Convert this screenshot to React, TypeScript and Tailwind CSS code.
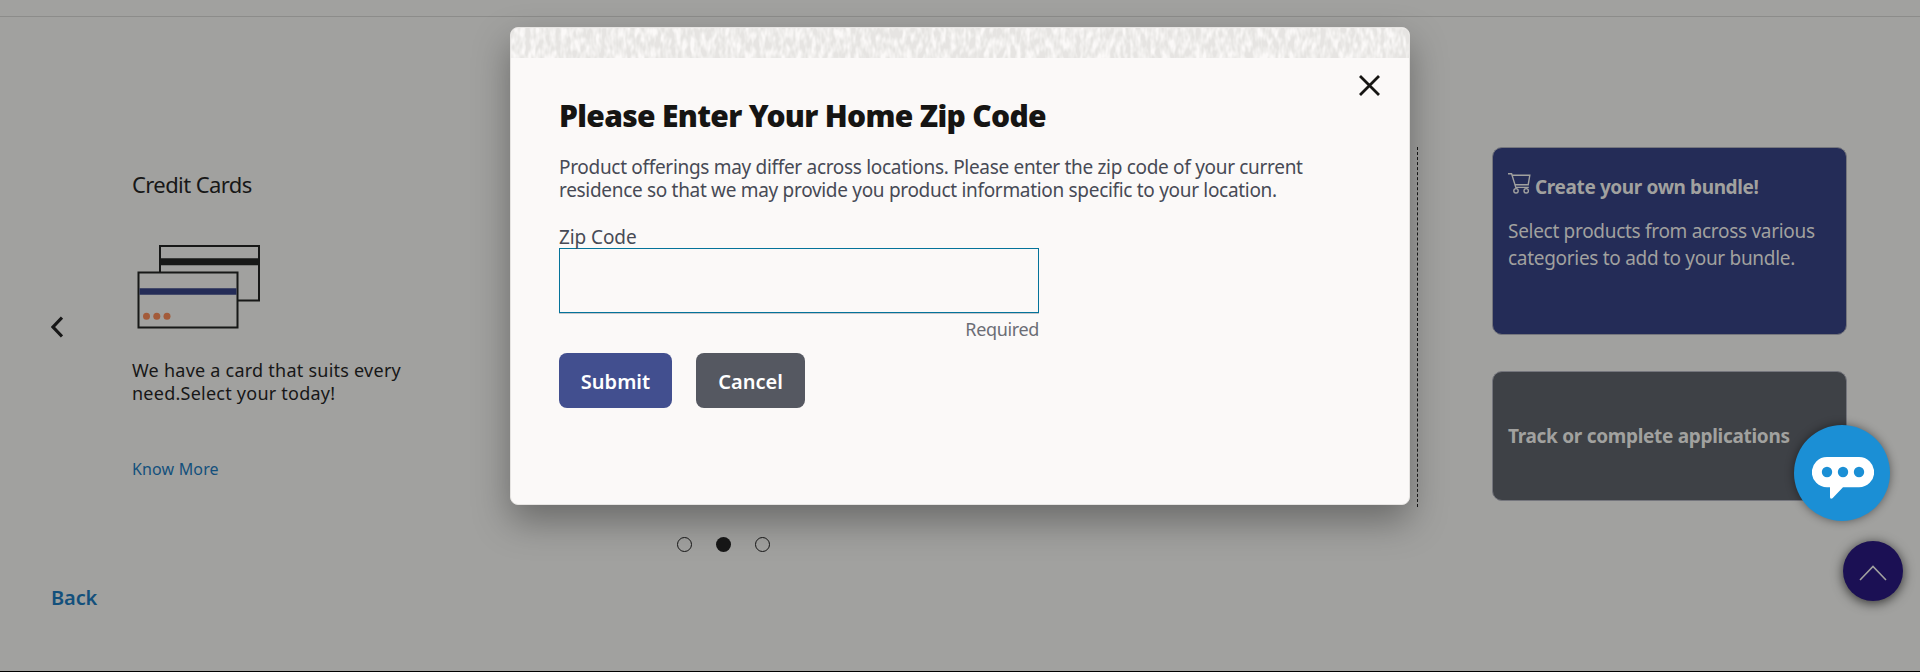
import React from 'react';

interface SideCardProps {
    className: string;
    children: React.ReactNode;
}

const SideCard: React.FC<SideCardProps> = ({ className, children }) => (
    <section className={`w-[355px] rounded-[10px] border border-[#75767d] px-[15px] text-[#a1a19f] ${className}`}>
        {children}
    </section>
);

const CreditCardsIcon: React.FC = () => (
    <svg className="ml-[5px] mt-[45px]" width="124" height="85" viewBox="0 0 124 85" fill="none">
        <path d="M23 28V2h99v54.5h-21" stroke="#171817" strokeWidth="2" />
        <path d="M24 14.3h97v7H24z" fill="#171817" />
        <path d="M1.5 28.5h99v55h-99z" stroke="#171817" strokeWidth="2" />
        <path d="M2.5 44.3h97v6.5h-97z" fill="#242c57" />
        <circle cx="9.5" cy="72.3" r="3.5" fill="#a35b3a" />
        <circle cx="19.8" cy="72.3" r="3.5" fill="#a35b3a" />
        <circle cx="30" cy="72.3" r="3.5" fill="#a35b3a" />
    </svg>
);

const CartIcon: React.FC = () => (
    <svg className="-mt-px" width="24" height="21" viewBox="0 0 24 21" fill="none" stroke="#a1a19f" strokeWidth="1.4">
        <path d="M0 .8h3.6l4.2 13.6h13M4.2 2.3h17.6l-1.6 9.4H7" />
        <circle cx="8" cy="17.8" r="2.2" />
        <circle cx="18.2" cy="17.8" r="2.2" />
    </svg>
);

const Texture: React.FC = () => (
    <svg className="block h-[30px] w-full">
        <filter id="grain" x="0" y="0" width="100%" height="100%" colorInterpolationFilters="sRGB">
            <feTurbulence type="fractalNoise" baseFrequency="0.2 0.09" numOctaves="2" seed="4" />
            <feColorMatrix values="0 0 0 0 0.9  0 0 0 0 0.895  0 0 0 0 0.885  2.6 0 0 0 -0.7" />
        </filter>
        <rect width="100%" height="100%" filter="url(#grain)" />
    </svg>
);

const ZipCodeDialog: React.FC = () => (
    <div
        role="dialog"
        className="absolute left-[510px] top-[27px] h-[478px] w-[900px] overflow-hidden rounded-lg border border-[#e6e4e2] bg-[#fbf9f8] shadow-[0_16px_36px_rgba(0,0,0,0.34)]"
    >
        <Texture />
        <button aria-label="Close" className="absolute right-[29px] top-[47px]">
            <svg width="21" height="21" viewBox="0 0 21 21" stroke="#161513" strokeWidth="2.8">
                <path d="M1 1l19 19M20 1L1 20" />
            </svg>
        </button>
        <div className="px-12 pt-[38px] text-[19px] text-[#474a55]">
            <h2 className="text-[30px] font-black leading-10 tracking-[-0.68px] text-[#161513]">
                Please Enter Your Home Zip Code
            </h2>
            <p className="mt-5 leading-[23.4px] tracking-[-0.31px]">
                Product offerings may differ across locations. Please enter the zip code of your current
                <br />
                residence so that we may provide you product information specific to your location.
            </p>
            <div className="mt-[22px] w-[480px]">
                <label htmlFor="zip" className="block h-[23px] leading-6 tracking-[-0.1px]">Zip Code</label>
                <input
                    id="zip"
                    className="block h-[65px] w-full border border-[#04739a] bg-transparent shadow-[0_1px_0_#c5c6ca] outline-none"
                />
                <div className="mt-1 text-right text-[18px] leading-6 tracking-[-0.35px] text-[#6b6d75]">Required</div>
            </div>
            <div className="mt-3 flex gap-6 text-[20px] font-semibold text-white">
                <button className="h-[55px] w-[113px] rounded-lg bg-[#424f8f] pt-[3px]">Submit</button>
                <button className="h-[55px] w-[109px] rounded-lg bg-[#555861] pt-[3px]">Cancel</button>
            </div>
        </div>
    </div>
);

export default function App() {
    return (
        <div className="relative flex h-[672px] w-full flex-col overflow-hidden bg-[#a1a19f] font-['Noto_Sans',sans-serif] text-[#171717]">
            <header className="h-[17px] border-b border-[#8c8c8a]" />
            <main className="mt-[130px] flex h-[360px]">
                <div className="flex w-[1418px] items-center border-r border-dashed border-[#171717] pl-[51px]">
                    <svg className="-mt-px" width="12" height="22" viewBox="0 0 12 22" fill="none" stroke="#171717" strokeWidth="3.2">
                        <path d="M11 1.5L2 11l9 9.5" />
                    </svg>
                    <div className="ml-[69px] flex h-full flex-col items-start pt-[22px]">
                        <h3 className="text-[22px] leading-[30px] tracking-[-0.6px]">Credit Cards</h3>
                        <CreditCardsIcon />
                        <p className="mt-[30px] text-[18px] leading-[23px] tracking-[0.24px]">
                            We have a card that suits every
                            <br />
                            need.Select your today!
                        </p>
                        <a className="mt-[53px] text-[16px] leading-[23px] tracking-[0.15px] text-[#13507c]">Know More</a>
                    </div>
                </div>
                <aside className="ml-[74px] flex flex-col gap-9 text-[19px] leading-[27px] tracking-[-0.3px]">
                    <SideCard className="h-[188px] bg-[#242c57] pt-[26px]">
                        <div className="flex gap-[3px]">
                            <CartIcon />
                            <h4 className="font-bold tracking-[-0.38px]">Create your own bundle!</h4>
                        </div>
                        <p className="mt-[17px]">
                            Select products from across various
                            <br />
                            categories to add to your bundle.
                        </p>
                    </SideCard>
                    <SideCard className="flex h-[130px] items-center bg-[#3e4146] pt-px font-bold">Track or complete applications</SideCard>
                </aside>
            </main>
            <div className="mt-[30px] flex gap-6 pl-[677px]">
                <i className="size-[15px] rounded-full border border-[#171717]" />
                <i className="size-[15px] rounded-full bg-[#171717]" />
                <i className="size-[15px] rounded-full border border-[#171717]" />
            </div>
            <a className="mt-8 pl-[51px] text-[20px] font-semibold leading-7 tracking-[-0.1px] text-[#13507c]">Back</a>
            <footer className="mt-auto h-px bg-black" />

            <button aria-label="Scroll to top" className="absolute left-[1843px] top-[541px] flex size-[60px] items-center justify-center rounded-full bg-[#1b1054] shadow-[0_2px_12px_rgba(0,0,0,0.7)]">
                <svg className="mt-1" width="28" height="16" viewBox="0 0 28 16" fill="none" stroke="#a1a19f" strokeWidth="1.6">
                    <path d="M1 15L14 1.5 27 15" />
                </svg>
            </button>
            <ZipCodeDialog />
            <button aria-label="Chat" className="absolute left-[1794px] top-[425px] flex size-24 items-center justify-center rounded-full bg-[#1b8fd5] shadow-[0_0_10px_rgba(0,0,0,0.45)]">
                <svg className="ml-[2px] mt-[10px]" width="62" height="42" viewBox="0 0 62 42">
                    <path d="M15 0h32a15 15 0 0 1 0 30.3H31L20.5 41.3Q18 42.5 18 40V30.3h-3A15 15 0 0 1 15 0z" fill="#fff" />
                    <circle cx="15" cy="15" r="5.2" fill="#1b8fd5" />
                    <circle cx="31" cy="15" r="5.2" fill="#1b8fd5" />
                    <circle cx="47" cy="15" r="5.2" fill="#1b8fd5" />
                </svg>
            </button>
        </div>
    );
}
